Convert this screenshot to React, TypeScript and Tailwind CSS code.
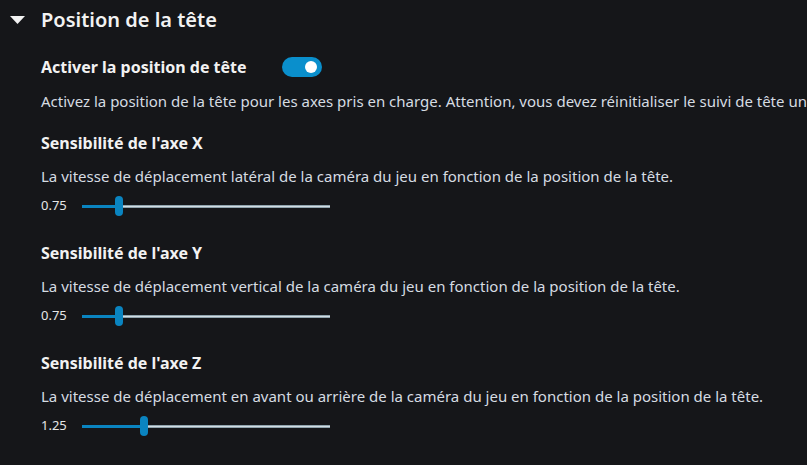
import React from 'react';

type Axis = { label: string; desc: string; value: number };

const axes: Axis[] = [
  {
    label: "Sensibilité de l'axe X",
    desc: 'La vitesse de déplacement latéral de la caméra du jeu en fonction de la position de la tête.',
    value: 0.75,
  },
  {
    label: "Sensibilité de l'axe Y",
    desc: 'La vitesse de déplacement vertical de la caméra du jeu en fonction de la position de la tête.',
    value: 0.75,
  },
  {
    label: "Sensibilité de l'axe Z",
    desc: 'La vitesse de déplacement en avant ou arrière de la caméra du jeu en fonction de la position de la tête.',
    value: 1.25,
  },
];

const Slider: React.FC<{ value: number }> = ({ value }) => {
  // range 0..5 over the 248px track
  const pct = (value / 5) * 100;
  return (
    <div className="relative w-[248px] h-[20px] flex items-center">
      <div className="absolute left-0 right-0 h-[3px] bg-[#d2dde3] border-y border-[#8fa3ad]" />
      <div className="absolute left-0 h-[3px] bg-[#0a84c0]" style={{ width: `${pct}%` }} />
      <div
        className="absolute w-[8px] h-[20px] rounded-full bg-[#0a84c0] -translate-x-1/2"
        style={{ left: `${pct}%` }}
      />
    </div>
  );
};

const Toggle: React.FC = () => (
  <div className="w-[40px] h-[20px] rounded-full bg-[#0a8fcc] flex items-center justify-end pr-[5px]">
    <div className="w-[12px] h-[12px] rounded-full bg-white" />
  </div>
);

export default function App() {
  return (
    <div
      className="w-[807px] h-[465px] overflow-hidden bg-[#151619] text-[#f2f2f2]"
      style={{ fontFamily: '"Noto Sans", "Open Sans", sans-serif' }}
    >
      <div className="flex items-center h-[40px] pl-[10px]">
        <svg width="15" height="8" viewBox="0 0 15 8" className="mr-[16px]">
          <polygon points="0,0 15,0 7.5,8" fill="#f2f2f2" />
        </svg>
        <h1 className="text-[20px] font-semibold">Position de la tête</h1>
      </div>

      <div className="pl-[41px] whitespace-nowrap">
        <div className="flex items-center h-[36px] mt-[9px]">
          <span className="text-[16px] font-bold">Activer la position de tête</span>
          <div className="ml-[35px]">
            <Toggle />
          </div>
        </div>
        <p className="text-[15px] text-[#d6dce2] h-[24px] leading-[24px] mt-[4px]">
          Activez la position de la tête pour les axes pris en charge. Attention, vous devez réinitialiser le suivi de tête une fois activé.
        </p>

        <div className="flex flex-col gap-[25px] mt-[18px]">
          {axes.map((a) => (
            <div key={a.label}>
              <div className="text-[16px] font-bold h-[24px] leading-[24px]">{a.label}</div>
              <p className="text-[15px] text-[#d6dce2] mt-[9px] h-[24px] leading-[24px]">{a.desc}</p>
              <div className="flex items-center h-[20px] mt-[8px]">
                <span className="text-[13px] w-[41px] text-[#e6e6e6]">{a.value.toFixed(2)}</span>
                <Slider value={a.value} />
              </div>
            </div>
          ))}
        </div>
      </div>
    </div>
  );
}
